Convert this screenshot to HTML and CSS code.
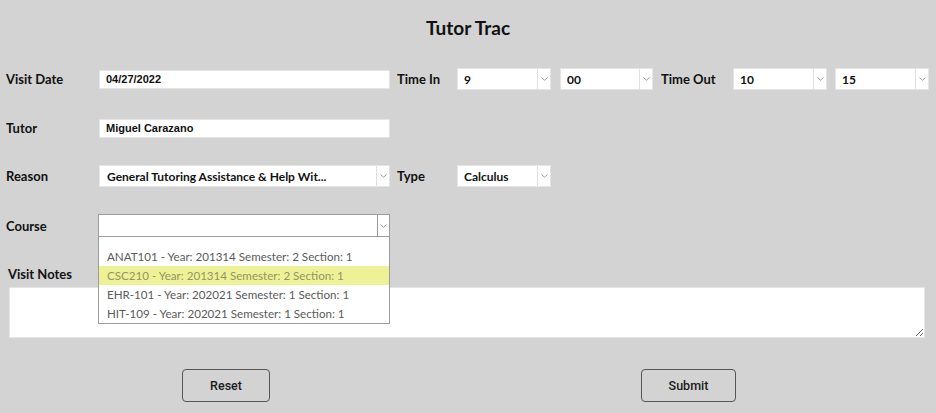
FILE: index.html
```html
<!DOCTYPE html>
<html lang="en">
<head>
<meta charset="utf-8">
<title>Tutor Trac</title>
<link rel="stylesheet" href="styles.css">
</head>
<body>
<div class="page">
  <h1 class="title">Tutor Trac</h1>
  <form class="form">
    <div class="row row-1">
      <span class="lbl lbl-first">Visit Date</span>
      <div class="field text wide">04/27/2022</div>
      <span class="lbl lbl-mid">Time In</span>
      <div class="field select sm"><span class="val">9</span><span class="arrow"><svg width="7" height="4" viewBox="0 0 7 4"><path d="M0.5 0.5 L3.5 3.2 L6.5 0.5" fill="none" stroke="#9a9a9a" stroke-width="1"/></svg></span></div>
      <div class="field select sm gap9"><span class="val">00</span><span class="arrow"><svg width="7" height="4" viewBox="0 0 7 4"><path d="M0.5 0.5 L3.5 3.2 L6.5 0.5" fill="none" stroke="#9a9a9a" stroke-width="1"/></svg></span></div>
      <span class="lbl lbl-out">Time Out</span>
      <div class="field select sm"><span class="val">10</span><span class="arrow"><svg width="7" height="4" viewBox="0 0 7 4"><path d="M0.5 0.5 L3.5 3.2 L6.5 0.5" fill="none" stroke="#9a9a9a" stroke-width="1"/></svg></span></div>
      <div class="field select sm gap8"><span class="val">15</span><span class="arrow"><svg width="7" height="4" viewBox="0 0 7 4"><path d="M0.5 0.5 L3.5 3.2 L6.5 0.5" fill="none" stroke="#9a9a9a" stroke-width="1"/></svg></span></div>
    </div>

    <div class="row row-2">
      <span class="lbl lbl-first">Tutor</span>
      <div class="field text wide">Miguel Carazano</div>
    </div>

    <div class="row row-3">
      <span class="lbl lbl-first">Reason</span>
      <div class="field select wide"><span class="val">General Tutoring Assistance &amp; Help Wit...</span><span class="arrow"><svg width="7" height="4" viewBox="0 0 7 4"><path d="M0.5 0.5 L3.5 3.2 L6.5 0.5" fill="none" stroke="#9a9a9a" stroke-width="1"/></svg></span></div>
      <span class="lbl lbl-mid">Type</span>
      <div class="field select sm"><span class="val">Calculus</span><span class="arrow"><svg width="7" height="4" viewBox="0 0 7 4"><path d="M0.5 0.5 L3.5 3.2 L6.5 0.5" fill="none" stroke="#9a9a9a" stroke-width="1"/></svg></span></div>
    </div>

    <div class="row row-4">
      <span class="lbl lbl-course">Course</span>
      <div class="course-wrap">
        <div class="field select course"><span class="val"></span><span class="arrow dark"><svg width="7" height="4" viewBox="0 0 7 4"><path d="M0.5 0.5 L3.5 3.2 L6.5 0.5" fill="none" stroke="#9a9a9a" stroke-width="1"/></svg></span></div>
        <ul class="dropdown">
          <li class="opt-empty"></li>
          <li class="opt">ANAT101 - Year: 201314 Semester: 2 Section: 1</li>
          <li class="opt active">CSC210 - Year: 201314 Semester: 2 Section: 1</li>
          <li class="opt">EHR-101 - Year: 202021 Semester: 1 Section: 1</li>
          <li class="opt">HIT-109 - Year: 202021 Semester: 1 Section: 1</li>
        </ul>
      </div>
    </div>

    <div class="notes-label">Visit Notes</div>
    <textarea class="notes"></textarea>

    <div class="buttons">
      <button type="button" class="btn btn-reset">Reset</button>
      <button type="button" class="btn btn-submit">Submit</button>
    </div>
  </form>
</div>
</body>
</html>
```

FILE: styles.css
```css
* { box-sizing: border-box; }

html, body {
  margin: 0;
  padding: 0;
  background: #d3d3d3;
}

body {
  width: 936px;
  height: 413px;
  overflow: hidden;
  font-family: "Lato", "DejaVu Sans", sans-serif;
  color: #111;
}

.page {
  position: relative;
}

.title {
  margin: 16px 0 0;
  height: 24px;
  line-height: 24px;
  font-size: 19px;
  font-weight: 700;
  text-align: center;
  color: #111;
}

.form {
  margin: 0;
}

.row {
  display: flex;
  align-items: center;
  height: 22px;
}

.row-1 { margin-top: 28px; }
.row-2 { margin-top: 27px; }
.row-3 { margin-top: 26px; }
.row-4 { margin-top: 27px; height: 23px; }

.lbl {
  font-size: 13px;
  font-weight: 700;
  line-height: 16px;
  white-space: nowrap;
}

.lbl-first {
  width: 99px;
  padding-left: 6px;
}

.lbl-course {
  width: 98px;
  padding-left: 6px;
}

.lbl-mid {
  width: 67px;
  padding-left: 7px;
}

.lbl-out {
  width: 80px;
  padding-left: 8px;
}

.field {
  background: #fff;
  border: 1px solid #e4e4e4;
  display: flex;
  align-items: center;
}

.text {
  height: 19px;
  padding-left: 6px;
  font-family: "Liberation Sans", Arial, sans-serif;
  font-weight: 700;
  font-size: 11px;
  color: #111;
}

.wide { width: 291px; }

.select {
  height: 22px;
  font-size: 12px;
  font-weight: 700;
  color: #111;
}

.select .val {
  flex: 1;
  padding-left: 6px;
  white-space: nowrap;
  overflow: hidden;
}

.row-3 .wide .val { padding-left: 7px; }

.select .arrow {
  width: 13px;
  height: 100%;
  border-left: 1px solid #e0e0e0;
  display: flex;
  align-items: center;
  justify-content: center;
}

.sm { width: 94px; }
.gap9 { margin-left: 9px; width: 93px; }
.gap8 { margin-left: 8px; }

.course-wrap {
  position: relative;
}

.course {
  width: 292px;
  height: 23px;
  border-color: #9c9c9c;
}

.course .arrow {
  width: 12px;
  border-left-color: #9c9c9c;
}

.dropdown {
  position: absolute;
  left: 0;
  top: 100%;
  width: 292px;
  margin: 0;
  padding: 0;
  list-style: none;
  background: #fff;
  border: 1px solid #9c9c9c;
  border-top: none;
  z-index: 5;
}

.opt-empty {
  height: 10px;
}

.opt {
  height: 19px;
  line-height: 19px;
  padding-left: 8px;
  font-size: 11.6px;
  color: #5a5a5a;
  white-space: nowrap;
}

.opt.active {
  background: #eef296;
  color: #939366;
}

.notes-label {
  margin-top: 29px;
  padding-left: 8px;
  font-size: 13px;
  font-weight: 700;
  line-height: 16px;
}

.notes {
  display: block;
  margin: 5px 0 0 9px;
  width: 916px;
  height: 51px;
  border: 1px solid #e4e4e4;
  background: #fff;
  resize: both;
  outline: none;
}

.buttons {
  display: flex;
  margin-top: 31px;
}

.btn {
  height: 33px;
  background: transparent;
  border: 1px solid #555;
  border-radius: 4px;
  font-family: "Roboto", "Liberation Sans", sans-serif;
  font-weight: 500;
  font-size: 12.5px;
  color: #1a1a1a;
  padding: 0;
}

.btn-reset {
  margin-left: 182px;
  width: 88px;
}

.btn-submit {
  margin-left: 371px;
  width: 95px;
}
```
